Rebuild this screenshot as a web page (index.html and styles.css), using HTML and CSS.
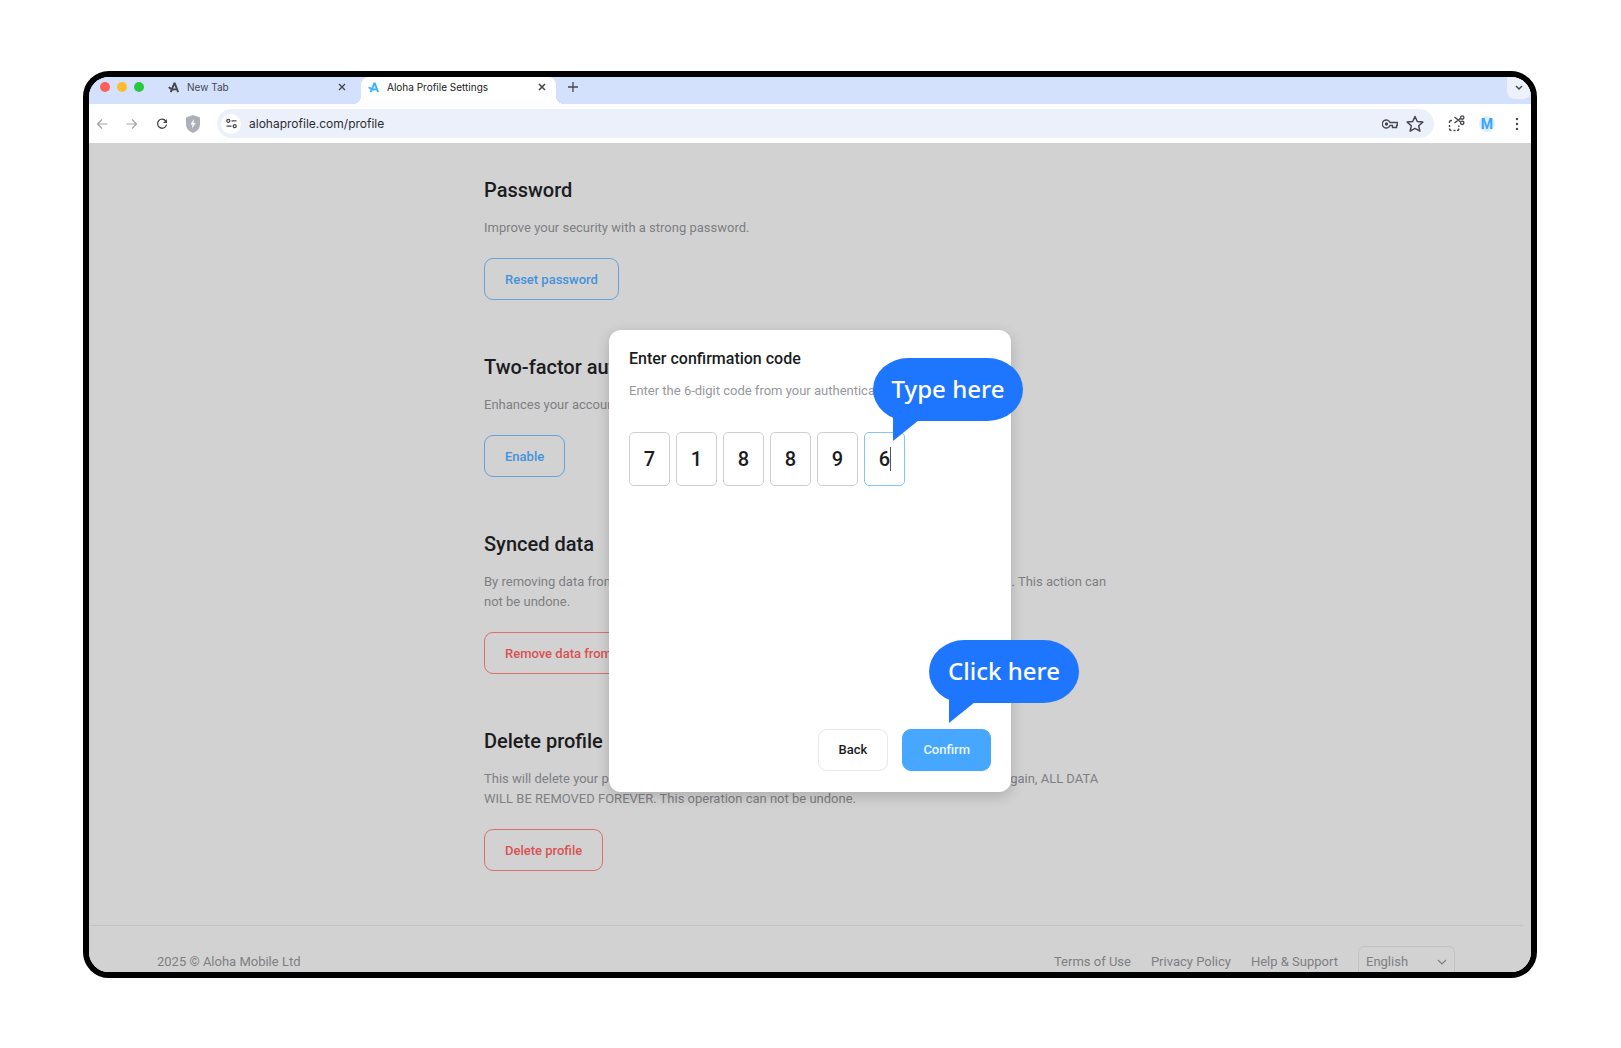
FILE: index.html
```html
<!DOCTYPE html>
<html lang="en">
<head>
    <meta charset="UTF-8">
    <meta name="viewport" content="width=device-width, initial-scale=1.0">
    <title>Aloha Profile Settings</title>
    <link rel="stylesheet" href="styles.css">
</head>
<body>
    <div class="window">
        <div class="tab-bar">
            <div class="lights">
                <span class="light red"></span>
                <span class="light yellow"></span>
                <span class="light green"></span>
            </div>
            <div class="tab">
                <svg class="logo" viewBox="0 0 22 20" fill="none" stroke="currentColor" stroke-width="3.6"><path d="M5 18.5 L11.500 2.500 H12.500 L18.500 18.500 M1.500 9.500 C5 13.500 11 14.500 16 12.500"/></svg>
                <span class="tab-title">New Tab</span>
                <button class="icon-button" aria-label="Close tab"><svg width="8" height="8" viewBox="0 0 8 8" stroke="currentColor" stroke-width="1.4"><path d="M1 1 L7 7 M7 1 L1 7"/></svg></button>
            </div>
            <div class="tab active">
                <svg class="logo" viewBox="0 0 22 20" fill="none" stroke="currentColor" stroke-width="3.6"><path d="M5 18.5 L11.500 2.500 H12.500 L18.500 18.500 M1.500 9.500 C5 13.500 11 14.500 16 12.500"/></svg>
                <span class="tab-title">Aloha Profile Settings</span>
                <button class="icon-button" aria-label="Close tab"><svg width="8" height="8" viewBox="0 0 8 8" stroke="currentColor" stroke-width="1.6"><path d="M1 1 L7 7 M7 1 L1 7"/></svg></button>
            </div>
            <button class="icon-button new-tab" aria-label="New tab"><svg width="10" height="10" viewBox="0 0 10 10" stroke="currentColor" stroke-width="1.3"><path d="M5 0 V10 M0 5 H10"/></svg></button>
            <button class="icon-button tab-search" aria-label="Search tabs"><svg width="8" height="6" viewBox="0 0 8 6" fill="none" stroke="currentColor" stroke-width="1.5"><path d="M1 1 L4 4 L7 1"/></svg></button>
        </div>

        <div class="toolbar">
            <button class="icon-button nav muted" aria-label="Back"><svg width="12" height="12" viewBox="0 0 12 12" fill="none" stroke="currentColor" stroke-width="1.2"><path d="M11.500 6 H1.500 M6 1.500 L1.500 6 L6 10.500"/></svg></button>
            <button class="icon-button nav muted" aria-label="Forward"><svg width="12" height="12" viewBox="0 0 12 12" fill="none" stroke="currentColor" stroke-width="1.2"><path d="M0.500 6 H10.500 M6 1.500 L10.500 6 L6 10.500"/></svg></button>
            <button class="icon-button nav" aria-label="Reload"><svg width="12" height="12" viewBox="0 0 12 12"><path d="M10 3.500 A4.500 4.500 0 1 0 10.500 6.500" fill="none" stroke="currentColor" stroke-width="1.300"/><path d="M11 1 V5 H7 Z" fill="currentColor"/></svg></button>
            <button class="icon-button shield" aria-label="Ad blocker"><svg width="14" height="18" viewBox="0 0 14 18"><path d="M7 0 L14 2.500 V9 C14 13.500 11 16.500 7 18 C3 16.500 0 13.500 0 9 V2.500 Z" fill="#aeb0b8"/><path d="M8 4 L4.500 9.500 H6.500 L6 13.500 L9.700 8 H7.500 Z" fill="#fff"/></svg></button>
            <div class="address">
                <button class="icon-button site-info" aria-label="Site information"><svg width="11" height="11" viewBox="0 0 11 11" fill="none" stroke="currentColor" stroke-width="1.3"><circle cx="2.300" cy="2.800" r="1.500"/><path d="M5.500 2.800 H10.500 M0.500 8.200 H5.500"/><circle cx="8.700" cy="8.200" r="1.500"/></svg></button>
                <input class="url" type="text" aria-label="Address" value="alohaprofile.com/profile">
                <button class="icon-button" aria-label="Passwords"><svg width="16" height="10" viewBox="0 0 16 10" fill="none" stroke="currentColor" stroke-width="1.3"><path d="M8 3.500 A4 4 0 1 0 8 6.500 H10.500 V8.500 H14.500 V6.500 H15.300 V3.500 Z"/><circle cx="4.500" cy="5" r="1" fill="currentColor"/></svg></button>
                <button class="icon-button" aria-label="Bookmark"><svg width="18" height="18" viewBox="0 0 18 18" fill="none" stroke="currentColor" stroke-width="1.500"><path d="M9 1.500 L11.300 6.500 L16.800 7.100 L12.700 10.800 L13.900 16.200 L9 13.400 L4.100 16.200 L5.300 10.800 L1.200 7.100 L6.700 6.500 Z" stroke-linejoin="round"/></svg></button>
            </div>
            <button class="icon-button" aria-label="Screenshot"><svg width="17" height="17" viewBox="0 0 17 17" fill="none" stroke="currentColor" stroke-width="1.400"><circle cx="14.200" cy="2.600" r="1.700"/><circle cx="14.200" cy="7.800" r="1.700"/><path d="M6.500 2 L12.600 7 M6.500 8 L12.600 3.400 M4 5.500 H3 Q1.500 5.500 1.500 7 V8 M1.500 10 V12 M1.500 13.500 Q1.500 15.500 3.500 15.500 M5.500 15.500 H7.500 M9 15.500 Q10.800 15.500 10.800 13.500 M10.800 12 V10.500"/></svg></button>
            <button class="avatar" aria-label="Profile">M</button>
            <button class="icon-button menu" aria-label="Menu"><svg width="4" height="14" viewBox="0 0 4 14" fill="currentColor"><circle cx="2" cy="2" r="1.200"/><circle cx="2" cy="7" r="1.200"/><circle cx="2" cy="12" r="1.200"/></svg></button>
        </div>

        <div class="page">
            <main class="settings">
                <section>
                    <h2>Password</h2>
                    <p>Improve your security with a strong password.</p>
                    <button class="btn blue">Reset password</button>
                </section>
                <section>
                    <h2>Two-factor auth</h2>
                    <p>Enhances your account security.</p>
                    <button class="btn blue">Enable</button>
                </section>
                <section>
                    <h2>Synced data</h2>
                    <p>By removing data from the server, all of your synced data stored will be permanently deleted. This action can<br>not be undone.</p>
                    <button class="btn red">Remove data from server</button>
                </section>
                <section>
                    <h2>Delete profile</h2>
                    <p>This will delete your profile and all your synced data. You will not be able to sign in or sync again, ALL DATA<br>WILL BE REMOVED FOREVER. This operation can not be undone.</p>
                    <button class="btn red">Delete profile</button>
                </section>
            </main>

            <footer class="footer">
                <span class="copyright">2025 © Aloha Mobile Ltd</span>
                <a href="#">Terms of Use</a>
                <a href="#">Privacy Policy</a>
                <a href="#">Help &amp; Support</a>
                <div class="language">
                    <select aria-label="Language">
                        <option>English</option>
                    </select>
                    <svg class="chevron" width="10" height="6" viewBox="0 0 10 6" fill="none" stroke="currentColor" stroke-width="1.200"><path d="M1 1 L5 5 L9 1"/></svg>
                </div>
            </footer>

            <div class="overlay">
                <div class="modal" role="dialog" aria-labelledby="modal-title">
                    <h3 id="modal-title">Enter confirmation code</h3>
                    <p>Enter the 6-digit code from your authenticator app</p>
                    <div class="code">
                        <input type="text" maxlength="1" value="7" aria-label="Digit 1">
                        <input type="text" maxlength="1" value="1" aria-label="Digit 2">
                        <input type="text" maxlength="1" value="8" aria-label="Digit 3">
                        <input type="text" maxlength="1" value="8" aria-label="Digit 4">
                        <input type="text" maxlength="1" value="9" aria-label="Digit 5">
                        <div class="current">
                            <input type="text" maxlength="1" value="6" aria-label="Digit 6">
                            <span class="caret"></span>
                        </div>
                    </div>
                    <div class="actions">
                        <button class="btn back">Back</button>
                        <button class="btn confirm">Confirm</button>
                    </div>
                    <div class="bubble type-hint">
                        <svg class="tail" viewBox="0 0 26 28"><path d="M0 0 H26 V7 L0 28 Z"/></svg>
                        Type here
                    </div>
                    <div class="bubble click-hint">
                        <svg class="tail" viewBox="0 0 26 28"><path d="M0 0 H26 V7 L0 28 Z"/></svg>
                        Click here
                    </div>
                </div>
            </div>
        </div>
    </div>
</body>
</html>
```
FILE: styles.css
```css
* {
    box-sizing: border-box;
}
body {
    margin: 0;
    padding: 71px 84px 70px 83px;
    background: #fff;
    font-family: Roboto, sans-serif;
}
button, input, select {
    font-family: inherit;
}

/* Browser window */
.window {
    display: flex;
    flex-direction: column;
    height: calc(100vh - 141px);
    border: 6px solid #000;
    border-radius: 26px;
    overflow: hidden;
    background: #fff;
}
.tab-bar {
    display: flex;
    height: 27px;
    background: #d3e1fc;
    font-family: Inter, sans-serif;
}
.lights {
    display: flex;
    gap: 7px;
    padding: 5px 11px;
    width: 72px;
}
.light {
    width: 10px;
    height: 10px;
    border-radius: 50%;
}
.light.red {
    background: #fe5f57;
}
.light.yellow {
    background: #febb2e;
}
.light.green {
    background: #28c840;
}
.tab {
    display: flex;
    align-items: center;
    gap: 7px;
    width: 200px;
    padding: 0 15px 7px 7px;
    color: #45484f;
}
.tab.active {
    position: relative;
    width: 195px;
    padding-right: 10px;
    background: #fff;
    border-radius: 8px 8px 0 0;
    color: #222;
}
/* flared bottom corners of the active tab */
.tab.active::before,
.tab.active::after {
    content: "";
    position: absolute;
    bottom: 0;
    width: 8px;
    height: 8px;
}
.tab.active::before {
    right: 100%;
    background: radial-gradient(circle at 0 0, transparent 8px, #fff 8px);
}
.tab.active::after {
    left: 100%;
    background: radial-gradient(circle at 100% 0, transparent 8px, #fff 8px);
}
.logo {
    width: 12px;
    height: 11px;
}
.active .logo {
    color: #37b4fb;
}
.tab-title {
    flex: 1;
    font-size: 10px;
}
.icon-button {
    display: flex;
    align-items: center;
    justify-content: center;
    padding: 0;
    border: none;
    background: none;
    color: #45484c;
}
.new-tab {
    width: 34px;
    padding-bottom: 7px;
}
.tab-search {
    width: 24px;
    height: 22px;
    margin-left: auto;
    border-radius: 0 0 8px 8px;
    background: #ecf1fb;
}
.toolbar {
    display: flex;
    align-items: center;
    flex-shrink: 0;
    gap: 14px;
    height: 39px;
    padding: 0 12px 0 7px;
}
.nav {
    width: 12px;
    margin-right: 4px;
}
.muted {
    color: #a0a2a6;
}
.address {
    display: flex;
    align-items: center;
    flex: 1;
    gap: 8px;
    height: 29px;
    margin-left: 3px;
    padding: 0 10px 0 4px;
    border-radius: 15px;
    background: #ecf0fa;
}
.site-info {
    width: 20px;
    height: 20px;
    border-radius: 50%;
    background: #fff;
}
.url {
    flex: 1;
    padding: 0;
    border: none;
    background: none;
    color: #2b2d31;
    font-family: Inter, sans-serif;
    font-size: 12px;
}
.avatar {
    width: 16px;
    height: 16px;
    padding: 0;
    border: none;
    border-radius: 50%;
    background: #dceffd;
    color: #40a4fb;
    font-size: 14px;
    font-weight: 700;
    line-height: 16px;
}
.menu {
    margin-left: 6px;
}

/* Settings page */
.page {
    position: relative;
    flex: 1;
    overflow: hidden;
    padding-right: 8px;
    background: #d2d2d2;
}
.settings {
    max-width: 644px;
    height: 782px;
    margin: 0 auto;
    padding-top: 33px;
}
section {
    margin-bottom: 53px;
}
h2 {
    margin: 0 0 14px;
    color: #1b1c1e;
    font-size: 20px;
    font-weight: 500;
    line-height: 28px;
}
p {
    margin: 0;
    font-size: 13px;
    line-height: 20px;
}
section p {
    margin-bottom: 20px;
    color: #7e7f83;
    white-space: nowrap;
}
.btn {
    height: 42px;
    padding: 0 20px;
    border: 1px solid;
    border-radius: 9px;
    background: none;
    font-size: 13px;
    font-weight: 500;
}
.btn.blue {
    border-color: #64a3dc;
    color: #4492dc;
}
.btn.red {
    border-color: #dd6f6f;
    color: #d95353;
}
.footer {
    display: flex;
    align-items: center;
    gap: 20px;
    height: 72px;
    padding: 0 68px;
    border-top: 1px solid #c3c3c4;
    color: #7e7f83;
    font-size: 13px;
}
.footer a {
    color: inherit;
    text-decoration: none;
}
.copyright {
    margin-right: auto;
}
.language {
    position: relative;
}
.language select {
    width: 97px;
    height: 32px;
    padding: 0 7px;
    border: 1px solid #c1c2c3;
    border-radius: 6px;
    appearance: none;
    background: none;
    color: inherit;
    font-size: 13px;
}
.chevron {
    position: absolute;
    top: 13px;
    right: 8px;
}

/* Confirmation dialog */
.overlay {
    position: absolute;
    inset: 0;
    display: flex;
    align-items: center;
    justify-content: center;
    padding: 6px 0 0;
}
.modal {
    position: relative;
    display: flex;
    flex-direction: column;
    width: 402px;
    height: 462px;
    padding: 17px 20px 21px;
    border-radius: 12px;
    background: #fff;
    box-shadow: 0 4px 14px rgba(0, 0, 0, 0.18);
}
h3 {
    margin: 0 0 10px;
    color: #1b1c1e;
    font-size: 16px;
    font-weight: 500;
    line-height: 24px;
}
.modal p {
    color: #97989d;
}
.code {
    display: flex;
    gap: 6px;
    margin-top: 31px;
}
.code input {
    display: block;
    width: 41px;
    height: 54px;
    padding: 0;
    border: 1px solid #cfcfd3;
    border-radius: 5px;
    background: #fff;
    color: #1b1c1e;
    font-size: 20px;
    font-weight: 500;
    text-align: center;
}
.current {
    position: relative;
}
.current input {
    border-color: #85c3fb;
}
.caret {
    position: absolute;
    top: 15px;
    left: 26px;
    width: 1px;
    height: 24px;
    background: #555;
}
.actions {
    display: flex;
    justify-content: flex-end;
    gap: 14px;
    margin-top: auto;
}
.back {
    border-color: #e8e8ea;
    color: #1b1c1e;
}
.confirm {
    border-color: #47a7ff;
    background: #47a7ff;
    color: #e9f5ff;
}
.bubble {
    position: absolute;
    width: 150px;
    height: 63px;
    border-radius: 36px / 32px;
    background: #1e76ff;
    color: #fff;
    font-family: "Noto Sans", sans-serif;
    font-size: 24px;
    font-weight: 500;
    line-height: 62px;
    text-align: center;
}
.type-hint {
    top: 28px;
    left: 264px;
}
.click-hint {
    top: 310px;
    left: 320px;
}
.tail {
    position: absolute;
    top: 55px;
    left: 20px;
    width: 26px;
    height: 28px;
    fill: #1e76ff;
}
```
